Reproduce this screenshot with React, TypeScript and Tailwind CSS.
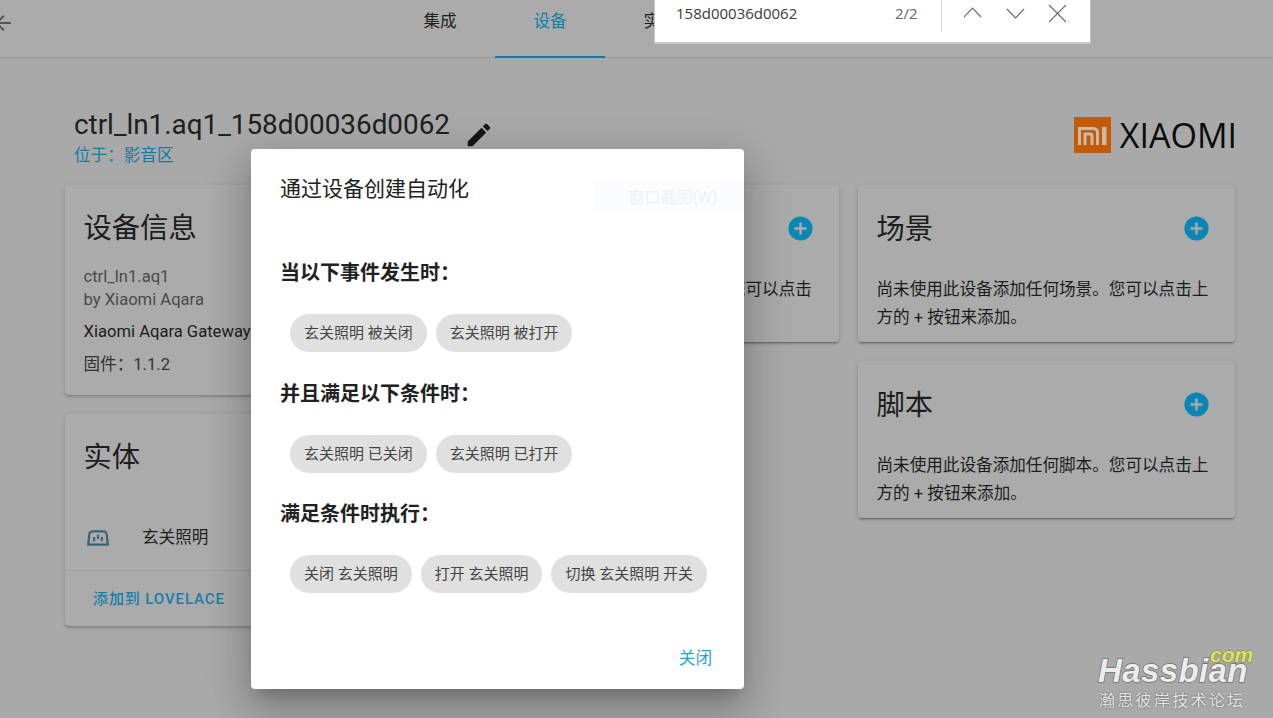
const CJK = "font-['Roboto','Noto_Sans_CJK_SC',sans-serif]";

function PlusCircle() {
  return (
    <svg viewBox="0 0 24 24" className="w-[29px] h-[29px] shrink-0 -mt-[3px]" fill="#0b87b5">
      <path d="M17,13H13V17H11V13H7V11H11V7H13V11H17M12,2A10,10 0 0,0 2,12A10,10 0 0,0 12,22A10,10 0 0,0 12,2Z" />
    </svg>
  );
}

function AddCard({ title, kind }: { title: string; kind: string }) {
  return (
    <div className="rounded-[4px] bg-[#ababab] shadow-[0_2px_2px_rgba(0,0,0,0.14),0_1px_5px_rgba(0,0,0,0.12),0_3px_1px_-2px_rgba(0,0,0,0.2)] pl-[18.5px] pr-[19px] pt-[24px] pb-[10px]">
      <div className="flex items-center justify-between pr-[5px] h-[42px]">
        <div className="text-[28.3px] leading-[42px] text-[#1d1d1d]">{title}</div>
        <PlusCircle />
      </div>
      <div className="mt-[25px] text-[16.6px] leading-[28px] text-[#1c1c1c]">
        尚未使用此设备添加任何{kind}。您可以点击上方的 + 按钮来添加。
      </div>
    </div>
  );
}

function Chip({ children }: { children: string }) {
  return (
    <div className="h-[38px] rounded-[19px] bg-[#e0e0e0] px-[14px] text-[15px] leading-[38px] text-[#444444] whitespace-pre">
      {children}
    </div>
  );
}

function Section({ title, chips }: { title: string; chips: string[] }) {
  return (
    <div className="mb-[29.5px]">
      <div className="text-[20px] leading-[24px] font-bold text-[#212121]">{title}</div>
      <div className="mt-[29px] ml-[10px] flex gap-[9px]">
        {chips.map((c) => (
          <Chip key={c}>{c}</Chip>
        ))}
      </div>
    </div>
  );
}

export default function App() {
  return (
    <div className={`relative w-[1273px] h-[718px] overflow-hidden bg-[#a9a9a9] ${CJK}`}>
      {/* header */}
      <div className="relative h-[58px] border-b border-[#999999] bg-[#ababab] flex pl-[385px]">
        <svg viewBox="0 0 24 24" className="absolute left-[-9px] top-[11px] w-[24px] h-[24px]" fill="#555555">
          <path d="M20,11V13H8L13.5,18.5L12.08,19.92L4.16,12L12.08,4.08L13.5,5.5L8,11H20Z" />
        </svg>
        <div className="w-[110px] text-center pt-[10px] text-[16.6px] text-[#1f1f1f]">集成</div>
        <div className="w-[110px] text-center pt-[10px] text-[16.6px] text-[#0f7da8] border-b-2 border-[#137aa1] h-[58px]">设备</div>
        <div className="w-[110px] text-center pt-[10px] text-[16.6px] text-[#1f1f1f]">实体</div>
      </div>

      {/* device heading */}
      <div className="pl-[65px] pr-[36px] pt-[49px]">
        <div className="flex justify-between">
          <div className="pl-[9px]">
            <div className="flex items-start">
              <div className="text-[27.85px] leading-[36px] text-[#202020]">ctrl_ln1.aq1_158d00036d0062</div>
              <svg viewBox="0 0 24 24" className="ml-[14px] mt-[13px] w-[30px] h-[30px]" fill="#151515">
                <path d="M20.71,7.04C21.1,6.65 21.1,6 20.71,5.63L18.37,3.29C18,2.9 17.35,2.9 16.96,3.29L15.12,5.12L18.87,8.87M3,17.25V21H6.75L17.81,9.93L14.06,6.18L3,17.25Z" />
              </svg>
            </div>
            <div className="-mt-[5px] text-[16.6px] leading-[22px] text-[#157aa5]">位于：影音区</div>
          </div>
          <div className="flex items-center h-[36px] mt-[10px]">
            <svg viewBox="0 0 37 36" className="w-[37px] h-[36px]">
              <rect width="37" height="36" fill="#c25b08" />
              <g fill="none" stroke="#cdb8a6" strokeWidth="3">
                <path d="M5.5 28V11.5H19.5a4 4 0 0 1 4 4V28" />
                <path d="M11 28V17H16a2 2 0 0 1 2 2V28" />
              </g>
              <rect x="28" y="10" width="4.5" height="18" fill="#cdb8a6" />
            </svg>
            <div className="ml-[9px] text-[34px] leading-[36px] text-[#0b0b0b] font-['Open_Sans','Roboto',sans-serif]">XIAOMI</div>
          </div>
        </div>

        {/* columns */}
        <div className="mt-[18px] grid grid-cols-[377px_377px_377px] gap-x-[19.5px]">
          <div className="flex flex-col gap-[19px]">
            <div className="rounded-[4px] bg-[#ababab] shadow-[0_2px_2px_rgba(0,0,0,0.14),0_1px_5px_rgba(0,0,0,0.12)] pl-[18.5px] pr-[19px] pt-[23px] h-[210px]">
              <div className="text-[28.3px] leading-[42px] text-[#1d1d1d]">设备信息</div>
              <div className="mt-[15px] text-[16.6px] leading-[23px] text-[#4a4a4a]">ctrl_ln1.aq1</div>
              <div className="text-[16.6px] leading-[23px] text-[#4a4a4a]">by Xiaomi Aqara</div>
              <div className="mt-[9px] text-[16.6px] leading-[24px] text-[#1c1c1c]">Xiaomi Aqara Gateway</div>
              <div className="mt-[9px] text-[16.6px] leading-[24px] text-[#333333]">固件：1.1.2</div>
            </div>
            <div className="rounded-[4px] bg-[#ababab] shadow-[0_2px_2px_rgba(0,0,0,0.14),0_1px_5px_rgba(0,0,0,0.12)] h-[212px] flex flex-col">
              <div className="pl-[18.5px] pt-[23px] text-[28.3px] leading-[42px] text-[#1d1d1d]">实体</div>
              <div className="mt-[39px] pl-[22px] flex items-center h-[40px]">
                <svg viewBox="0 0 20 16" className="w-[22px] h-[18px]" fill="#3d6478">
                  <path
                    fillRule="evenodd"
                    d="M5 1h10a4 4 0 0 1 4 4l1 10H0l1-10a4 4 0 0 1 4-4ZM5.5 3A2.5 2.5 0 0 0 3 5.5L2.4 13H17.6L17 5.5A2.5 2.5 0 0 0 14.5 3ZM5.5 7h2v4h-2ZM12.5 7h2v4h-2ZM9 5h2v4H9Z"
                  />
                </svg>
                <div className="ml-[33px] text-[16.6px] text-[#1f1f1f]">玄关照明</div>
              </div>
              <div className="mt-[12px] border-t border-[#9e9e9e] pl-[28px] pt-[15px] text-[15px] leading-[26px] text-[#177fa8] font-medium tracking-[0.9px]">
                添加到 LOVELACE
              </div>
            </div>
          </div>
          <div>
            <AddCard title="自动化" kind="自动化" />
          </div>
          <div className="flex flex-col gap-[19px]">
            <AddCard title="场景" kind="场景" />
            <AddCard title="脚本" kind="脚本" />
          </div>
        </div>
      </div>

      {/* find bar */}
      <div className="absolute left-[655px] top-[-1px] w-[435px] h-[44px] bg-white border-b border-[#c8c8c8] shadow-[0_0_0_1px_#c4c4c4] pl-[21px] flex items-start text-[#3a3a3a] text-[15px] font-['Open_Sans','Roboto',sans-serif]">
        <div className="w-[219px] leading-[28px]">158d00036d0062</div>
        <div className="w-[46px] leading-[28px] text-[#666666]">2/2</div>
        <div className="h-[33px] border-l border-[#dcdcdc]" />
        <svg viewBox="0 0 102 20" className="ml-[22px] mt-[5px] w-[102px] h-[20px]" fill="none" stroke="#666666" strokeWidth="1.1">
          <path d="M0 13L8.5 4L17 13" />
          <path d="M43 5L51.5 14L60 5" />
          <path d="M85 1L102 18M102 1L85 18" />
        </svg>
      </div>

      {/* dialog */}
      <div className="absolute left-[251px] top-[149px] w-[493px] h-[540px] rounded-[4px] bg-white shadow-[0_11px_15px_-7px_rgba(0,0,0,0.2),0_24px_38px_3px_rgba(0,0,0,0.14),0_9px_46px_8px_rgba(0,0,0,0.12)]">
        <div className="absolute left-[342px] top-[34px] w-[150px] h-[29px] bg-[#fafcff] pl-[10px] text-center text-[16px] leading-[29px] text-[#edf1f7]">窗口截图(W)</div>
        <div className="relative pl-[29px] pt-[25px]">
          <div className="text-[21px] leading-[30px] text-[#212121]">通过设备创建自动化</div>
          <div className="mt-[57px]">
            <Section title="当以下事件发生时：" chips={["玄关照明 被关闭", "玄关照明 被打开"]} />
            <Section title="并且满足以下条件时：" chips={["玄关照明 已关闭", "玄关照明 已打开"]} />
            <Section title="满足条件时执行：" chips={["关闭 玄关照明", "打开 玄关照明", "切换 玄关照明 开关"]} />
          </div>
        </div>
        <div className="absolute right-[32px] bottom-[20px] text-[16.6px] leading-[20px] text-[#1ea5d6]">关闭</div>
      </div>

      {/* watermark */}
      <div className="absolute left-[1098px] top-[646px] w-[160px] h-[66px]">
        <div className="absolute left-[0px] top-[7px] text-[33px] leading-[36px] font-bold italic text-[#ececec] tracking-[0.4px] font-['Liberation_Sans',sans-serif] [-webkit-text-stroke:1.5px_#6f6f6f] [paint-order:stroke_fill]">Hassbian</div>
        <div className="absolute left-[112px] top-[-1px] text-[21px] leading-[20px] font-bold italic text-[#dce45c] font-['Liberation_Sans',sans-serif] [-webkit-text-stroke:1px_#7a7a40] [paint-order:stroke_fill]">com</div>
        <div className="absolute left-[1px] top-[45px] text-[16px] leading-[20px] text-[#e4e4e4] tracking-[2.3px] [text-shadow:0_0_2px_#555555]">瀚思彼岸技术论坛</div>
      </div>
    </div>
  );
}
